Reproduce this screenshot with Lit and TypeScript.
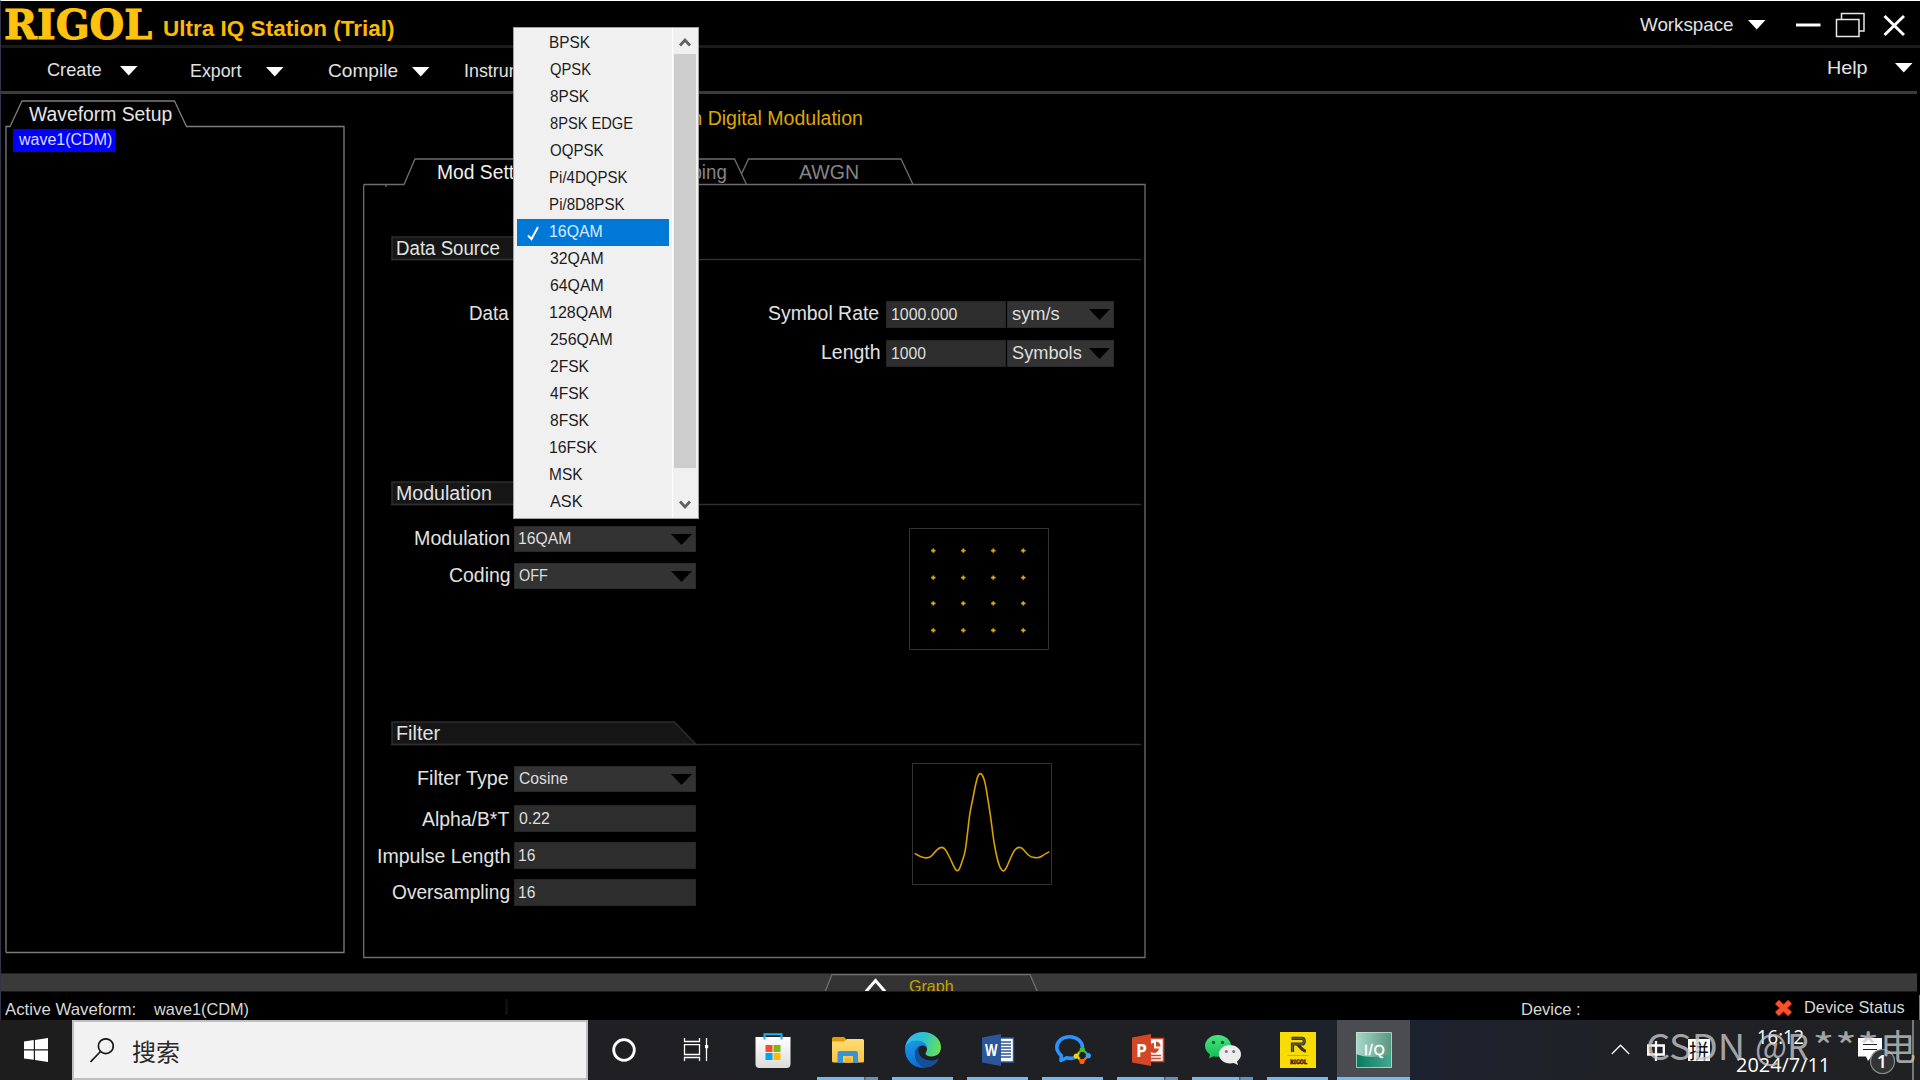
import { LitElement, html, css, svg, nothing } from "lit";
import { customElement, property } from "lit/decorators.js";

const SANS = '"Liberation Sans", Arial, sans-serif';
const CJK = '"Noto Sans CJK SC", "Noto Sans", sans-serif';
const OPEN = '"Open Sans", "Noto Sans", sans-serif';
const SLAB = '"DejaVu Serif", serif';

const pen = document.createElement("canvas").getContext("2d")!;

/** One line of text condensed or widened to an exact ink width; the box bottom is the baseline. */
@customElement("fit-text")
export class FitText extends LitElement {
  @property() text = "";
  @property({ type: Number }) size = 18.5;
  @property({ type: Number }) w = 0;
  @property() weight = "400";
  @property() font = SANS;

  static styles = css`
    :host { display: block; flex: none; white-space: pre; }
    .slot, .line { display: block; }
    .line { transform-origin: 0 50%; }
  `;

  render() {
    pen.font = `${this.weight} ${this.size}px ${this.font}`;
    const m = pen.measureText(this.text);
    const ink = m.actualBoundingBoxLeft + m.actualBoundingBoxRight;
    const width = this.w || ink;
    const lh = Math.round(m.fontBoundingBoxAscent) - Math.round(m.fontBoundingBoxDescent);
    return html`<span class="slot" style="width:${width}px;height:${lh}px"
      ><span
        class="line"
        style="font:${this.weight} ${this.size}px/${lh}px ${this.font};transform:scaleX(${(width / ink).toFixed(4)});text-indent:${m.actualBoundingBoxLeft.toFixed(2)}px"
        >${this.text}</span></span>`;
  }
}

const t = (text: string, w: number, size = 19, weight = "400", font = SANS) =>
  html`<fit-text .text=${text} .w=${w} .size=${size} .weight=${weight} .font=${font}></fit-text>`;

const caret = html`<svg class="caret" width="18" height="10" viewBox="0 0 18 10"><path d="M0 0H17.500L8.750 9.500Z" fill="#fff" /></svg>`;

const OPTIONS: [string, number][] = [
  ["BPSK", 40], ["QPSK", 41], ["8PSK", 39], ["8PSK EDGE", 83], ["OQPSK", 53.5],
  ["Pi/4DQPSK", 77.5], ["Pi/8D8PSK", 74.5], ["16QAM", 52], ["32QAM", 53], ["64QAM", 53],
  ["128QAM", 61.5], ["256QAM", 62], ["2FSK", 39], ["4FSK", 39], ["8FSK", 39],
  ["16FSK", 47], ["MSK", 32.5], ["ASK", 32.5],
];
const SELECTED = "16QAM";

const storeIcon = svg`
  <defs><linearGradient id="st" x1="0" y1="0" x2="0" y2="1"><stop offset="0" stop-color="#fff"/><stop offset="1" stop-color="#dcdcdc"/></linearGradient></defs>
  <path d="M.5 5H35.500V32a4 4 0 0 1-4 4H4.500a4 4 0 0 1-4-4Z" fill="url(#st)"/>
  <path d="M9.500 7.500V2.200H26.500V7.500" fill="none" stroke="#1fb2ee" stroke-width="2"/>
  <path d="M10.500 13h7v7h-7z" fill="#f25022"/><path d="M18.500 13h7v7h-7z" fill="#7fba00"/>
  <path d="M10.500 21h7v7h-7z" fill="#00a4ef"/><path d="M18.500 21h7v7h-7z" fill="#ffb900"/>`;

const folderIcon = svg`
  <defs><linearGradient id="fo" x1="0" y1="0" x2="0" y2="1"><stop offset="0" stop-color="#ffdc76"/><stop offset="1" stop-color="#f9c646"/></linearGradient></defs>
  <path d="M2 6.500a1.500 1.500 0 0 1 1.500-1.500H14l3 3v4H2Z" fill="#e39c05"/>
  <path d="M2 9.500h12l3-2.500H32.500a1.500 1.500 0 0 1 1.500 1.500V29a1.500 1.500 0 0 1-1.500 1.500H3.500A1.500 1.500 0 0 1 2 29Z" fill="url(#fo)"/>
  <path d="M7.500 31V21a2 2 0 0 1 2-2H26a2 2 0 0 1 2 2V31H22.800V24H13V31Z" fill="#3b93d6"/>
  <path d="M13 24h9.800v6.500H13z" fill="#f7c64a"/><path d="M15 26h6v4.500h-6z" fill="#f0b52e"/>`;

const edgeIcon = svg`
  <defs>
    <linearGradient id="e1" x1="0" y1=".3" x2="1" y2=".5"><stop offset="0" stop-color="#35b9f5"/><stop offset=".5" stop-color="#2bc3d0"/><stop offset="1" stop-color="#6be04d"/></linearGradient>
    <linearGradient id="e2" x1="0" y1="0" x2=".4" y2="1"><stop offset="0" stop-color="#1a9de6"/><stop offset="1" stop-color="#0a6fd0"/></linearGradient>
  </defs>
  <path d="M0 17C.5 7 8 0 18 0c10 0 18 7 18 15 0 6-4 9.500-9.500 9.500-4 0-6-1.500-6-3 0-1 1.500-1.800 1.500-4.500C22 12 17 9 12 9 6 9 1.500 12 0 17Z" fill="url(#e1)"/>
  <path d="M0 17C1 11.500 6 8.500 11.500 8.500c6 0 10.500 3.500 10.500 8-.3-1.500-2-3-4.500-3-4 0-7.500 4-7.500 9 0 6.500 5 11.500 11 13.200C9 37 0 29 0 17Z" fill="url(#e2)"/>
  <path d="M14 14.500c-2.500 1.500-4 4.500-4 8 0 7 5.500 12.500 11.500 13.200C27 35 31 32 33.300 28c.4-.8-.2-1.300-1-.9-2 1-4 1.500-6.300 1.500-7 0-12.500-4.500-12.500-9.500 0-1.700.2-3.200.5-4.600Z" fill="#134f9c"/>`;

const wordIcon = svg`
  <path d="M18 6h15.500v24H18z" fill="#fff" stroke="#2b5797" stroke-width="1.400"/>
  <path d="M19 10h12M19 13h12M19 16h12M19 19h12M19 22h12M19 25h12" stroke="#2b5797" stroke-width="1.400"/>
  <path d="M2 5.500 21 2V34L2 30.500Z" fill="#2b579a"/>
  <text x="11.200" y="24" text-anchor="middle" font-family="Open Sans, sans-serif" font-weight="700" font-size="16" textLength="12.500" lengthAdjust="spacingAndGlyphs" fill="#fff">W</text>`;

const pptIcon = svg`
  <path d="M18 6.500h15.500v23H18z" fill="#fff" stroke="#d24726" stroke-width="1.600"/>
  <path d="M21 23.500h10M21 26.500h10" stroke="#d24726" stroke-width="1.500"/>
  <path d="M24 11a5 5 0 1 0 5 5.500H24Z" fill="#d24726"/><path d="M26 9.500a5 5 0 0 1 4.500 5H26Z" fill="#d24726"/>
  <path d="M2 5.500 21 2V34L2 30.500Z" fill="#d24726"/>
  <text x="11.500" y="24.500" text-anchor="middle" font-family="Open Sans, sans-serif" font-weight="700" font-size="17.500" fill="#fff">P</text>`;

const wecomIcon = svg`
  <path d="M22 24.500c-2.500 1.600-6.500 2.300-10.500 1.300L6 28.500l.3-5C3 20.500 1.800 18.500 1.800 15.500 1.800 9.500 7.300 4.700 14.500 4.700S27.500 9.500 27.500 15.500" fill="none" stroke="#2b93fb" stroke-width="3.600" stroke-linejoin="round"/>
  <path d="M23 21.500 27 17.500 31.500 21" fill="none" stroke="#44c51c" stroke-width="2.200"/><circle cx="27.300" cy="17.500" r="2.600" fill="#44c51c"/>
  <path d="M31 20.500 33 24 30 27" fill="none" stroke="#3aa0f5" stroke-width="2"/><circle cx="33.300" cy="23.700" r="2.600" fill="#3aa0f5"/>
  <path d="M31 26 27 30 24 27" fill="none" stroke="#fb6500" stroke-width="2.200"/><circle cx="27" cy="29.500" r="2.600" fill="#fb6500"/>
  <path d="M24.500 27 22 24 24 21" fill="none" stroke="#fcc900" stroke-width="2"/><circle cx="21.300" cy="24" r="2.600" fill="#fcd000"/>`;

const wechatIcon = svg`
  <defs><linearGradient id="wc" x1="0" y1="0" x2="0" y2="1"><stop offset="0" stop-color="#4be27e"/><stop offset="1" stop-color="#12bd55"/></linearGradient></defs>
  <path d="M13 3C5.800 3 0 7.800 0 14c0 3.500 2 6.500 5 8.500L4 26.500l4.500-2.300c1.500.4 3 .6 4.500.6C20.200 24.800 26 20 26 14S20.200 3 13 3Z" fill="url(#wc)"/>
  <circle cx="8.500" cy="10.500" r="1.700" fill="#0a6b33"/><circle cx="17.500" cy="10.500" r="1.700" fill="#0a6b33"/>
  <path d="M25 13c-6 0-11 4-11 9.200s5 9.300 11 9.300c1.300 0 2.600-.2 3.800-.5L33 33l-1-3.500c2.500-1.800 4-4.300 4-7.300C36 17 31 13 25 13Z" fill="#ececec"/>
  <circle cx="21.300" cy="19.500" r="1.500" fill="#777"/><circle cx="28.700" cy="19.500" r="1.500" fill="#777"/>`;

const rigolIcon = svg`
  <path d="M0 0h36v36H0z" fill="#f9dc04"/>
  <path d="M11.500 6.300h10.500c3 0 3 5.700 0 5.700h-9.500v8M16.500 12.500c3 0 5 6.500 9.500 6.500" fill="none" stroke="#37372b" stroke-width="3.200"/>
  <path d="M11.500 6.300h10.500c3 0 3 5.700 0 5.700h-9.500v8" fill="none" stroke="#8d8960" stroke-width=".6"/>
  <path d="M7.500 23.500h21" stroke="#a89a1c" stroke-width=".7"/>
  <text x="18.500" y="31.500" text-anchor="middle" font-family="DejaVu Serif, serif" font-weight="700" font-size="6" textLength="17" lengthAdjust="spacingAndGlyphs" stroke="#111" stroke-width=".4" fill="#111">RIGOL</text>`;

const iqIcon = svg`
  <defs><linearGradient id="iq" x1="0" y1="0" x2="1" y2="0"><stop offset="0" stop-color="#a9d8c8"/><stop offset="1" stop-color="#55957f"/></linearGradient>
  <linearGradient id="iq2" x1="0" y1="0" x2="1" y2="0"><stop offset="0" stop-color="#067a5c"/><stop offset="1" stop-color="#48a891"/></linearGradient></defs>
  <path d="M0 0h36v36H0z" fill="url(#iq)"/><path d="M0 22C10 26 25 26 36 21V36H0Z" fill="url(#iq2)"/>
  <path d="M.5.5h35v35H.5z" fill="none" stroke="#cfe6dd" stroke-width=".7"/>
  <text x="18.300" y="22.500" text-anchor="middle" font-family="Liberation Sans, Arial, sans-serif" font-size="14" textLength="20.500" stroke="#fff" stroke-width=".4" fill="#fff">I/Q</text>`;

const cortanaIcon = svg`<circle cx="18" cy="18" r="10.300" fill="none" stroke="#fff" stroke-width="2.800"/>`;
const taskViewIcon = svg`<g fill="none" stroke="#fff" stroke-width="1.300">
  <path d="M4.500 6v3.500H19.500V6M4.500 29v-3.500H19.500V29M4.500 12.600H19.500V22.500H4.500ZM26.500 6v7M26.500 16v13"/></g><path d="M25 13h3.200v3.200H25z" fill="#fff"/>`;

interface App { icon: unknown; state?: "run" | "multi" | "active"; }
const APPS: App[] = [
  { icon: taskViewIcon }, { icon: storeIcon }, { icon: folderIcon, state: "multi" },
  { icon: edgeIcon, state: "run" }, { icon: wordIcon, state: "run" }, { icon: wecomIcon, state: "run" },
  { icon: pptIcon, state: "multi" }, { icon: wechatIcon, state: "multi" }, { icon: rigolIcon, state: "run" },
  { icon: iqIcon, state: "active" },
];

/** Smooth path through the midpoints of a point list. */
const smooth = (p: number[][]) => {
  let d = `M${p[0][0]} ${p[0][1]}`;
  for (let i = 1; i < p.length - 1; i++) {
    d += `Q${p[i][0]} ${p[i][1]} ${(p[i][0] + p[i + 1][0]) / 2} ${(p[i][1] + p[i + 1][1]) / 2}`;
  }
  const last = p[p.length - 1];
  return `${d}L${last[0]} ${last[1]}`;
};

@customElement("app-root")
export class AppRoot extends LitElement {
  static styles = css`
    :host { display: block; width: 1920px; height: 1080px; overflow: hidden; background: #000; color: #e2e2e2; position: relative; font-family: "Liberation Sans", Arial, sans-serif; }
    * { box-sizing: border-box; }
    svg { display: block; flex: none; }
    .window { height: 1020px; display: flex; flex-direction: column; border-top: 1px solid #fff; border-left: 1px solid #33334a; }
    .titlebar { flex: none; height: 47px; border-bottom: 3px solid #1a1a1a; display: flex; align-items: flex-start; padding-left: 4px; }
    .brand { color: #ffc20e; padding-top: 9px; -webkit-text-stroke: 1px #ffc20e; }
    .product { color: #ffb900; padding: 20px 0 0 12px; }
    .spacer { flex: 1; }
    .workspace { display: flex; align-items: flex-start; padding-top: 17px; }
    .workspace .caret { margin: 2px 0 0 15px; }
    .controls { display: flex; gap: 15px; margin: 11px 15px 0 30px; }
    .menubar { flex: none; height: 46px; width: 1916px; border-bottom: 3px solid #3b3b3b; display: flex; align-items: flex-end; padding-bottom: 14px; }
    .menubar .caret { margin-bottom: 0; }
    .m1 { padding: 0 19px 1px 46px; }
    .m1 + .caret { margin-bottom: 1px; }
    .m2 { padding: 0 24px 0 53px; }
    .m3 { padding: 0 14px 0 44px; }
    .m4 { padding-left: 35px; }
    .m5 { padding: 0 28px 3px 0; }
    .help { margin: 0 4px 4px 0; }
    .main { flex: none; height: 879px; display: flex; }
    .side { position: relative; width: 340px; height: 854px; margin: 6px 0 0 4px; }
    .frame { position: absolute; left: 0; top: 0; }
    .side-title { height: 21px; display: flex; align-items: flex-end; padding-left: 24px; color: #e6e6e6; }
    .node { display: flex; align-items: flex-end; background: #00f; width: 102px; height: 23px; margin: 8px 0 0 8px; padding: 0 0 7px 5px; color: #dcdcff; }
    .work { position: relative; width: 784px; margin-left: 18px; height: 866px; }
    .work-frame { position: absolute; left: 0; top: 64px; }
    .heading { height: 31px; width: 499px; display: flex; align-items: flex-end; justify-content: flex-end; color: #dfa800; }
    .tabs { height: 54px; display: flex; align-items: flex-end; color: #858585; padding-left: 75px; }
    .tab-on { color: #f0f0f0; }
    .tab-mid { width: 187px; display: flex; justify-content: flex-end; }
    .tab-last { padding-left: 73px; }
    .s1 { margin-top: 57px; height: 245px; }
    .s2 { height: 240px; }
    .s3 { height: 230px; }
    .s-head { position: relative; height: 24px; margin-left: 28px; width: 750px; display: flex; align-items: flex-end; padding: 0 0 5px 6px; }
    .s-head fit-text { position: relative; }
    .s-body { display: flex; }
    .s1 .s-body { padding-top: 41px; }
    .s2 .s-body { padding-top: 21px; }
    .s3 .s-body { padding-top: 21px; }
    .col { width: 333px; display: flex; flex-direction: column; }
    .s1 .col { gap: 12px; }
    .s2 .col { gap: 11px; }
    .s3 .col { gap: 10px; }
    .col.right { width: 418px; }
    .row { display: flex; height: 27px; }
    .row.short { height: 26px; }
    .s3 .row.short { margin-bottom: 3px; }
    .label { width: 146px; display: flex; align-items: flex-end; justify-content: flex-end; padding-bottom: 6px; margin-right: 5px; }
    .short .label, .s3 .row:last-child .label { padding-bottom: 7px; }
    .right .label { width: 183px; margin-right: 7px; padding-bottom: 8px; }
    .box { width: 182px; background: #2d2d2d; border: 1px solid #262626; display: flex; align-items: flex-end; padding: 0 3px 7px 4px; color: #dedede; }
    .select { background: #333; border-color: #2b2b2b; justify-content: space-between; }
    .select svg { align-self: center; margin-top: 7px; }
    .right .box { width: 120px; padding-left: 5px; }
    .right .select { width: 107px; margin-left: 1px; padding-left: 4px; }
    .plot-a { margin: 2px 0 0 213px; }
    .plot-b { margin: -3px 0 0 216px; }
    .popup { position: absolute; left: 513px; top: 27px; width: 186px; height: 492px; background: #f0f0f0; border: 1px solid #a0a0a0; display: flex; color: #1c1c1c; }
    .options { width: 159px; padding: 2px 0 0 3px; border-right: 1px solid #fff; flex: none; }
    .option { height: 27px; width: 152px; display: flex; align-items: flex-end; padding: 0 0 9px 32.5px; }
    .option.on { background: #0078d7; color: #dcebff; padding-left: 10px; gap: 11px; }
    .check { margin-bottom: -4px; }
    .scroll { width: 22px; margin-left: 1px; display: flex; flex-direction: column; align-items: center; }
    .arrow { height: 26px; padding-top: 9px; }
    .thumb { width: 22px; height: 414px; background: #cdcdcd; }
    .arrow.down { padding-top: 32px; }
    .graph { flex: none; position: relative; height: 19px; width: 1916px; background: #3a3a3a; border-top: 1px solid #222; border-bottom: 1px solid #1a1a1a; overflow: hidden; display: flex; padding-left: 823px; }
    .graph-tab { position: absolute; left: 823px; top: -1px; }
    .graph-label { position: relative; padding: 6px 0 0 85px; color: #c9a400; }
    .status { flex: none; height: 27px; display: flex; align-items: flex-end; padding: 0 16px 4px 4px; color: #d8d8d8; }
    .status .wave { padding-left: 17px; }
    .tick { width: 3px; height: 16px; margin-left: 257px; background: #0e0e0e; }
    .device { padding-right: 194px; }
    .dstat { padding: 0 0 2px 12px; }
    .err { margin-bottom: -2px; }
    .taskbar { height: 60px; display: flex; background: linear-gradient(90deg, #1d1d1d 0, #202024 34%, #1f2023 60%, #1c222e 74%, #1f2126 84%, #202123 100%); color: #fff; }
    .start { width: 72px; padding: 18px 0 0 24px; }
    .search { width: 516px; background: #f2f2f2; border: 2px solid #bfbfbf; display: flex; color: #2a2a2a; padding: 16px 0 0 16px; gap: 18px; }
    .search-text { padding-top: 2px; }
    .slot { width: 75px; height: 60px; display: flex; flex-direction: column; align-items: center; padding-top: 12px; }
    .slot.first { width: 72px; }
    .slot.active { width: 73px; background: #4b4c52; margin-left: 2px; }
    .bar { width: 61px; height: 3px; margin-top: 9px; background: #76b9ed; }
    .bar.multi { background: linear-gradient(90deg, #76b9ed 47px, #3f6583 47px, #3f6583 48px, #6193bc 49px); }
    .active .bar { width: 73px; }
    .tray { display: flex; flex: 1; padding-left: 201px; }
    .up { padding-top: 24px; }
    .ime { padding: 21px 0 0 17px; }
    .pin { background: #fff; color: #111; width: 22px; height: 22px; margin: 19px 0 0 23px; padding: 3px 0 0 1px; }
    .clock { width: 91px; margin-left: 25px; display: flex; flex-direction: column; align-items: center; padding-top: 9px; gap: 13px; }
    .note { margin: 17px 0 0 32px; }
    .edge { position: absolute; left: 1912px; top: 1020px; width: 2px; height: 60px; background: #77787a; }
    .edge2 { position: absolute; left: 1919px; top: 995px; width: 1px; height: 25px; background: #777; }
    .mark { position: absolute; left: 1648px; top: 1020px; height: 60px; width: 272px; padding-bottom: 20px; display: flex; align-items: flex-end; color: rgba(200, 200, 200, 0.78); }
    .mark-b { padding-left: 15px; }
    .mark-c { padding-left: 7px; }
    .mark-d { padding-left: 7px; margin-bottom: -1px; }
  `;

  private head(text: string, w: number) {
    return html`<div class="s-head">
      <svg class="frame" width="750" height="25" viewBox="0 0 750 25">
        <path d="M1 23.500V1H283.500L305 23.500Z" fill="#161616" stroke="#2c2c2c" stroke-width="1.500" />
        <path d="M0 23.500H750" stroke="#2e2e2e" stroke-width="1.500" />
      </svg>
      ${t(text, w, 19.5)}
    </div>`;
  }

  private box(text: string, w: number, select = false, size = 16) {
    return html`<div class="box ${select ? "select" : ""}">
      ${t(text, w, size)}
      ${select ? html`<svg width="21" height="11" viewBox="0 0 21 11"><path d="M0 0H21L10.500 11Z" fill="#000" /></svg>` : nothing}
    </div>`;
  }

  private field(label: string, lw: number, value: string, vw: number, select = false) {
    return html`<div class="row ${select ? "short" : ""}">
      <div class="label">${t(label, lw, 20)}</div>
      ${this.box(value, vw, select)}
    </div>`;
  }

  private wide(label: string, lw: number, value: string, vw: number, unit: string, uw: number) {
    return html`<div class="row">
      <div class="label">${t(label, lw, 20)}</div>
      ${this.box(value, vw)} ${this.box(unit, uw, true, 17.5)}
    </div>`;
  }

  private constellation() {
    const xs = [24.3, 54.3, 84.3, 114.3];
    const ys = [22.6, 49.6, 75.4, 102.4];
    return html`<svg class="plot-a" width="140" height="122" viewBox="0 0 140 122">
      <path d="M.5.5h139v121H.5z" fill="none" stroke="#333" />
      ${ys.map((y) => xs.map((x) => svg`<path d="M${x - 2.2} ${y}h4.400M${x} ${y - 2.2}v4.400" stroke="#e6aa00" stroke-width="1.600"/>`))}
    </svg>`;
  }

  private impulse() {
    const pts = [[8,271],[29,284],[54,285],[66,270],[82,253],[96,253],[107,271],[119,296],[129,318],[136,325],[143,318],[150,296],[160,266],[167,206],[174,146],[182,111],[190,66],[198,37],[205,30],[212,37],[220,61],[228,111],[236,161],[244,226],[251,266],[259,301],[267,319],[274,325],[281,319],[289,301],[304,266],[316,253],[329,253],[342,269],[356,283],[382,285],[394,276],[412,266]];
    return html`<svg class="plot-b" width="140" height="122" viewBox="0 0 140 122">
      <path d="M.5.500h139v121H.5z" fill="none" stroke="#333" />
      <path d=${smooth(pts.map(([x, y]) => [x / 3, y / 3]))} fill="none" stroke="#d9a000" stroke-width="1.600" />
    </svg>`;
  }

  private popup() {
    return html`<div class="popup">
      <div class="options">
        ${OPTIONS.map(([name, w]) => html`<div class="option ${name === SELECTED ? "on" : ""}">
          ${name === SELECTED
            ? html`<svg class="check" width="12" height="15" viewBox="0 0 12 15"><path d="M1 9.500 4.500 13 11 1" fill="none" stroke="#fff" stroke-width="2" /></svg>`
            : nothing}
          ${t(name, w, 16.5)}
        </div>`)}
      </div>
      <div class="scroll">
        <div class="arrow"><svg width="12" height="10" viewBox="0 0 12 10"><path d="M1 8.500 6 3 11 8.500" fill="none" stroke="#606060" stroke-width="2.800" /></svg></div>
        <div class="thumb"></div>
        <div class="arrow down"><svg width="12" height="10" viewBox="0 0 12 10"><path d="M1 1.500 6 7 11 1.500" fill="none" stroke="#606060" stroke-width="2.800" /></svg></div>
      </div>
    </div>`;
  }

  render() {
    return html`
      <div class="window">
        <div class="titlebar">
          <div class="brand">${t("RIGOL", 147, 41.5, "700", SLAB)}</div>
          <div class="product">${t("Ultra IQ Station (Trial)", 230, 22.5, "700")}</div>
          <div class="spacer"></div>
          <div class="workspace">${t("Workspace", 93)}${caret}</div>
          <svg class="controls" width="109" height="26" viewBox="0 0 109 26">
            <path d="M0 13H24.500" stroke="#fff" stroke-width="3" />
            <path d="M45.500 7.500V1.500H68V19H63.500M40.500 7.500H63V24.500H40.500Z" fill="none" stroke="#e8e8e8" stroke-width="1.500" />
            <path d="M88.500 4 108 23M108 4 88.500 23" stroke="#fff" stroke-width="3" />
          </svg>
        </div>
        <div class="menubar">
          <div class="m1">${t("Create", 54)}</div>${caret}
          <div class="m2">${t("Export", 51)}</div>${caret}
          <div class="m3">${t("Compile", 69.5)}</div>${caret}
          <div class="m4">${t("Instrument", 84)}</div>
          <div class="spacer"></div>
          <div class="m5">${t("Help", 39)}</div>
          <div class="help">${caret}</div>
        </div>
        <div class="main">
          <div class="side">
            <svg class="frame" width="342" height="856" viewBox="0 0 342 856">
              <path d="M1 852.500V26.500H5L17 1H169.500L181.500 26.500H339V852.500H1" fill="none" stroke="#7c7c7c" stroke-width="1.300" />
            </svg>
            <div class="side-title">${t("Waveform Setup", 143, 20)}</div>
            <div class="node">${t("wave1(CDM)", 94, 16)}</div>
          </div>
          <div class="work">
            <svg class="work-frame" width="784" height="802" viewBox="0 0 784 802">
              <path d="M.700 26.500H41L52 1H371.500L383.500 26.500M378.500 16 385.500 1H538L550 26.500M180 26.500H782V799.500H.700V26.500M23 27v2" fill="none" stroke="#6e6e6e" stroke-width="1.300" />
            </svg>
            <div class="heading">${t("Custom Digital Modulation", 227, 19.5)}</div>
            <div class="tabs">
              <div class="tab-on">${t("Mod Setting", 101, 19.5)}</div>
              <div class="tab-mid">${t("Mapping", 70, 19.5)}</div>
              <div class="tab-last">${t("AWGN", 59, 19.5)}</div>
            </div>
            <section class="s1">
              ${this.head("Data Source", 102)}
              <div class="s-body">
                <div class="col">${this.field("Data", 39.5, "PN9", 30, true)}</div>
                <div class="col right">
                  ${this.wide("Symbol Rate", 111, "1000.000", 65.5, "sym/s", 48)}
                  ${this.wide("Length", 57.5, "1000", 34, "Symbols", 70)}
                </div>
              </div>
            </section>
            <section class="s2">
              ${this.head("Modulation", 94)}
              <div class="s-body">
                <div class="col">
                  ${this.field("Modulation", 94, "16QAM", 52, true)}
                  ${this.field("Coding", 59.5, "OFF", 29, true)}
                </div>
                ${this.constellation()}
              </div>
            </section>
            <section class="s3">
              ${this.head("Filter", 43.5)}
              <div class="s-body">
                <div class="col">
                  ${this.field("Filter Type", 91, "Cosine", 49, true)}
                  ${this.field("Alpha/B*T", 87, "0.22", 31)}
                  ${this.field("Impulse Length", 131.5, "16", 16.5)}
                  ${this.field("Oversampling", 117, "16", 16.5)}
                </div>
                ${this.impulse()}
              </div>
            </section>
          </div>
        </div>
        <div class="graph">
          <svg class="graph-tab" width="216" height="19" viewBox="0 0 216 19">
            <path d="M1 19 8 1.500H206L213.500 19" fill="#333" stroke="#707070" stroke-width="1.300" />
            <path d="M42 18.500 51.500 7.500 61 18.500" fill="none" stroke="#fff" stroke-width="3" />
          </svg>
          <div class="graph-label">${t("Graph", 44.5, 16.5)}</div>
        </div>
        <div class="status">
          ${t("Active Waveform:", 130.5, 16.5)}
          <div class="wave">${t("wave1(CDM)", 95.5, 16.5)}</div>
          <div class="tick"></div>
          <div class="spacer"></div>
          <div class="device">${t("Device :", 58, 16.5)}</div>
          <svg class="err" width="19" height="18" viewBox="0 0 19 18">
            <path d="M3 3 16 15M16 3 3 15" stroke="#b81c06" stroke-width="6.200" /><path d="M3 3 16 15M16 3 3 15" stroke="#f9532a" stroke-width="4.600" />
          </svg>
          <div class="dstat">${t("Device Status", 99.5, 16.5)}</div>
        </div>
      </div>
      <div class="taskbar">
        <div class="start">
          <svg width="24" height="24" viewBox="0 0 24 24"><path d="M0 3.500 9.800 2.100V11.300H0ZM11 1.900 24 0V11.300H11ZM0 12.500H9.800V21.800L0 20.500ZM11 12.500H24V24L11 22Z" fill="#fff" /></svg>
        </div>
        <div class="search">
          <svg width="24" height="25" viewBox="0 0 24 25"><circle cx="15.800" cy="8.200" r="7.400" fill="none" stroke="#1a1a1a" stroke-width="1.700" /><path d="M10.500 13.500.500 24" stroke="#1a1a1a" stroke-width="1.700" /></svg>
          <div class="search-text">${t("搜索", 47, 24, "400", CJK)}</div>
        </div>
        <div class="slot first"><svg width="36" height="36" viewBox="0 0 36 36">${cortanaIcon}</svg></div>
        ${APPS.map((a) => html`<div class="slot ${a.state ?? ""}">
          <svg width="36" height="36" viewBox="0 0 36 36">${a.icon}</svg>
          ${a.state ? html`<div class="bar ${a.state}"></div>` : nothing}
        </div>`)}
        <div class="tray">
          <div class="up"><svg width="19" height="11" viewBox="0 0 19 11"><path d="M.800 10 9.500 1.200 18.200 10" fill="none" stroke="#fff" stroke-width="1.300" /></svg></div>
          <div class="ime"><svg width="18" height="20" viewBox="0 0 18 20"><path d="M1.200 4.500H16.800V13.500H1.200ZM9 0V20" fill="none" stroke="#fff" stroke-width="2.300" /></svg></div>
          <div class="pin">${t("拼", 20, 20, "400", CJK)}</div>
          <div class="clock">${t("16:12", 46, 19.5, "400", OPEN)}${t("2024/7/11", 90, 19.5, "400", OPEN)}</div>
          <svg class="note" width="38" height="40" viewBox="0 0 38 40">
            <path d="M0 1H24V19.500H13.500L10 24 8 19.500H0Z" fill="#fff" /><path d="M5 7.500H19M5 12.500H19" stroke="#222" stroke-width="1.200" />
            <circle cx="24.500" cy="24.500" r="12" fill="#333436" stroke="#8c8c8c" stroke-width="1.200" />
            <text x="24" y="31" text-anchor="middle" font-family="Open Sans, sans-serif" font-weight="600" font-size="18" fill="#fff">1</text>
          </svg>
        </div>
      </div>
      <div class="edge"></div>
      <div class="edge2"></div>
      <div class="mark">
        ${t("CSDN", 94, 36, "400", CJK)}
        <div class="mark-b">${t("@R", 51, 36, "400", CJK)}</div>
        <div class="mark-c">${t("***", 62, 36, "400", CJK)}</div>
        <div class="mark-d">${t("电", 0, 36, "400", CJK)}</div>
      </div>
      ${this.popup()}
    `;
  }
}
